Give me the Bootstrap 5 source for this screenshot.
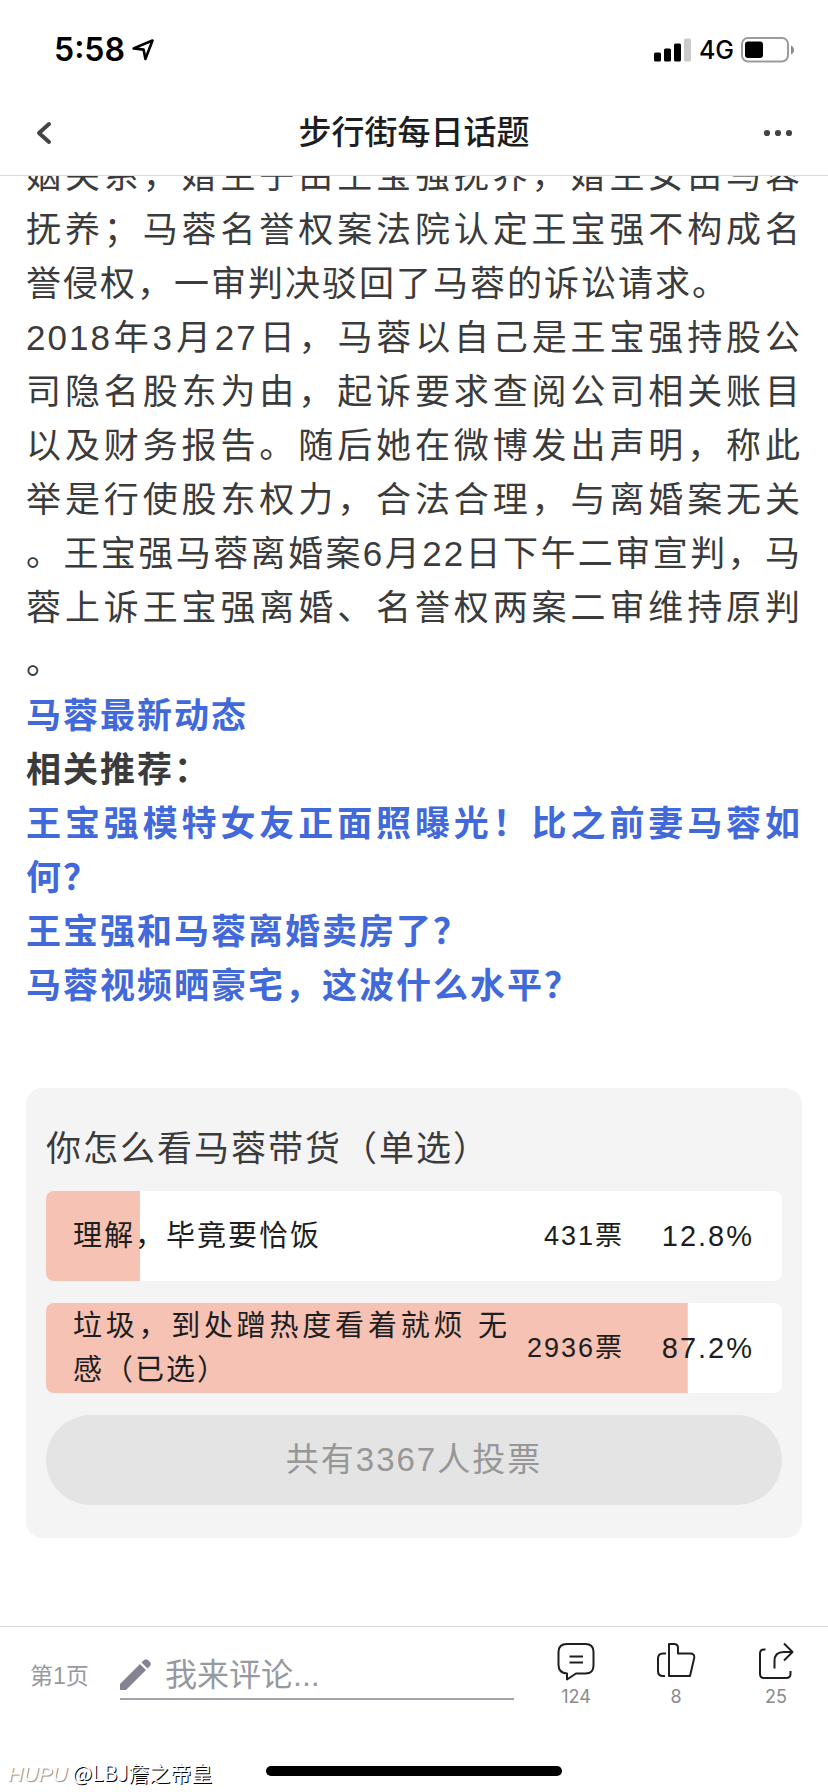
<!DOCTYPE html>
<html lang="zh-CN">
<head>
<meta charset="utf-8">
<meta name="viewport" content="width=device-width, initial-scale=1">
<title>步行街每日话题</title>
<link href="https://cdn.jsdelivr.net/npm/bootstrap@5.3.0/dist/css/bootstrap.min.css" rel="stylesheet">
<style>
  body { font-family: "Liberation Sans", "Noto Sans CJK SC", sans-serif; color: #3b3b3b; background: #fff; }
  svg { display: block; }
  .ui-num { font-family: Inter, "Noto Sans CJK SC", sans-serif; }

  .status-bar { height: 88px; padding: 12px 33px 0 54px; color: #000; }
  .status-group { gap: 7px; }
  .clock { font-size: 32px; font-weight: 600; line-height: 40px; }
  .carrier { font-size: 25px; font-weight: 500; line-height: 40px; }

  .title-bar { height: 88px; padding: 2px 24px 0; border-bottom: 1px solid #d9d9d9; }
  .title-bar h1 { font-size: 33px; font-weight: 500; line-height: 40px; color: #1d1e22; }
  .icon-btn { width: 60px; height: 60px; color: #444447; }

  .page-gutter { padding: 0 26px; }
  .article { margin-top: -27px; font-size: 35px; line-height: 54px; letter-spacing: 2px; text-align: justify; line-break: anywhere; }
  .article a { color: #4169d9; }

  .poll { margin-top: 75px; padding: 33px 20px; border-radius: 16px; background: #f4f4f4; letter-spacing: 2px; }
  .poll h2 { font-size: 35px; font-weight: 400; line-height: 56px; margin-bottom: 14px; }
  .poll-option { min-height: 90px; padding: 0 28px 0 27px; margin-bottom: 22px; border-radius: 8px; color: #1d1e22; line-height: 44px;
    background: linear-gradient(#f5c2b3, #f5c2b3) left / var(--share) 100% no-repeat #fff; }
  .option-label { width: 436px; font-size: 29px; text-align: justify; }
  .votes { font-size: 27px; }
  .share-text { width: 130px; font-size: 29px; }
  .poll-total { height: 90px; font-size: 33px; color: #979797; background: #e4e4e4; letter-spacing: 2px; }

  .bottom-bar { height: 166px; border-top: 1px solid #d9d9d9; }
  .page-link-no { width: 120px; padding-left: 30px; font-size: 23px; line-height: 36px; color: #96999f; margin-top: 31px; }
  .comment-box { height: 58px; margin-top: 15px; padding-top: 10px; gap: 13px; border-bottom: 2px solid #a6a5ae; }
  .comment-box input { font-size: 32px; line-height: 44px; padding: 0; }
  .comment-box input::placeholder { color: #96999f; opacity: 1; }
  .actions { margin-left: 12px; margin-right: 2px; padding-top: 14px; }
  .action-btn { width: 100px; font-size: 18px; line-height: 24px; color: #8a8a8d; }
  .home-bar { width: 296px; height: 10px; border-radius: 5px; background: #000; }
  .watermark { left: 8px; bottom: 3px; font-family: "Noto Sans CJK SC", sans-serif; font-size: 21px; line-height: 30px; color: #fff; text-shadow: 1px 1px 0 #000; }
  .watermark em { text-shadow: 1px 1px 1px #8a8a8a; font-family: "Liberation Sans", sans-serif; }
</style>
</head>
<body>
<div class="vh-100 d-flex flex-column overflow-hidden">
  <div class="status-bar ui-num d-flex align-items-center justify-content-between flex-shrink-0">
    <div class="status-group d-flex align-items-center">
      <span class="clock">5:58</span>
      <svg width="22" height="22" viewBox="0 0 22 22" fill="none" stroke="#000" stroke-width="2.6" stroke-linejoin="round"><path d="M20.5 1.5 L13.4 20 L11.6 10.6 L1.6 9.4 Z"/></svg>
    </div>
    <div class="status-group d-flex align-items-center">
      <svg width="38" height="24" viewBox="0 0 38 24"><rect x="0" y="14.5" width="7" height="9" rx="1.5"/><rect x="10" y="10.5" width="7" height="13" rx="1.5"/><rect x="20" y="5.5" width="7" height="18" rx="1.5"/><rect x="30" y="0.5" width="7" height="23" rx="1.5" fill="#cbcbcb"/></svg>
      <span class="carrier">4G</span>
      <svg width="54" height="26" viewBox="0 0 54 26"><rect x="1" y="1" width="46" height="23.5" rx="6" fill="none" stroke="#9c9c9c" stroke-width="2"/><rect x="4" y="4.5" width="18" height="16.5" rx="3"/><path d="M50 8.5 q3 1.5 3 4.5 t-3 4.5z" fill="#8c8c8c"/></svg>
    </div>
  </div>

  <header class="title-bar d-flex align-items-center justify-content-between flex-shrink-0">
    <button type="button" class="btn icon-btn p-0 border-0" aria-label="返回"><svg width="40" height="60" viewBox="0 0 40 60" fill="none" stroke="currentColor" stroke-width="4" stroke-linecap="round" stroke-linejoin="round"><path d="M25 21 L15 30 L25 39"/></svg></button>
    <h1 class="m-0">步行街每日话题</h1>
    <button type="button" class="btn icon-btn p-0 border-0" aria-label="更多"><svg width="60" height="60" viewBox="0 0 60 60" fill="currentColor"><circle cx="23" cy="30" r="3.1"/><circle cx="34" cy="30" r="3.1"/><circle cx="45" cy="30" r="3.1"/></svg></button>
  </header>

  <main class="page-gutter flex-grow-1 overflow-hidden">
    <article class="article">
      <p class="m-0">姻关系，婚生子由王宝强抚养，婚生女由马蓉抚养；马蓉名誉权案法院认定王宝强不构成名誉侵权，一审判决驳回了马蓉的诉讼请求。</p>
      <p class="m-0">2018年3月27日，马蓉以自己是王宝强持股公司隐名股东为由，起诉要求查阅公司相关账目以及财务报告。随后她在微博发出声明，称此举是行使股东权力，合法合理，与离婚案无关。王宝强马蓉离婚案6月22日下午二审宣判，马蓉上诉王宝强离婚、名誉权两案二审维持原判。</p>
      <p class="m-0"><a href="#" class="fw-bold text-decoration-none">马蓉最新动态</a></p>
      <p class="m-0 fw-bold">相关推荐：</p>
      <p class="m-0"><a href="#" class="fw-bold text-decoration-none">王宝强模特女友正面照曝光！比之前妻马蓉如何？</a></p>
      <p class="m-0"><a href="#" class="fw-bold text-decoration-none">王宝强和马蓉离婚卖房了？</a></p>
      <p class="m-0"><a href="#" class="fw-bold text-decoration-none">马蓉视频晒豪宅，这波什么水平？</a></p>
    </article>

    <section class="poll">
      <h2>你怎么看马蓉带货（单选）</h2>
      <div class="poll-option d-flex align-items-center" style="--share:12.8%">
        <span class="option-label">理解，毕竟要恰饭</span>
        <span class="votes ms-auto">431票</span>
        <span class="share-text text-end">12.8%</span>
      </div>
      <div class="poll-option d-flex align-items-center" style="--share:87.2%">
        <span class="option-label">垃圾，到处蹭热度看着就烦 无感（已选）</span>
        <span class="votes ms-auto">2936票</span>
        <span class="share-text text-end">87.2%</span>
      </div>
      <button type="button" class="poll-total btn border-0 rounded-pill w-100 p-0">共有3367人投票</button>
    </section>
  </main>

  <footer class="bottom-bar position-relative d-flex flex-column justify-content-between flex-shrink-0">
    <div class="d-flex align-items-start">
      <span class="page-link-no flex-shrink-0">第1页</span>
      <label class="comment-box d-flex align-items-center flex-grow-1">
        <svg class="flex-shrink-0" width="32" height="32" viewBox="0 0 32 32" fill="#858391"><path d="M0 25 L20 5 L26 11 L6 31 H0Z"/><path d="M21.500 3.500 L24 1 Q26 -0.500 28 1 L30 3 Q31.500 5 30 7 L27.500 9.500Z"/></svg>
        <input type="text" class="form-control border-0 shadow-none bg-transparent rounded-0" placeholder="我来评论..." aria-label="我来评论">
      </label>
      <div class="actions ui-num d-flex flex-shrink-0">
        <button type="button" class="action-btn btn border-0 p-0 d-flex flex-column align-items-center gap-1" aria-label="评论 124">
          <svg width="40" height="40" viewBox="0 0 40 40" fill="none" stroke="#1d1e22" stroke-width="2" stroke-linejoin="round"><path d="M11 3 H29.5 Q37.5 3 37.5 11 V24.5 Q37.5 32.5 29.5 32.5 H20 L11 38.5 V32.5 Q2.5 32 2.5 24 V11 Q2.5 3 11 3Z"/><path d="M13.5 15.5 H27 M13.5 21.5 H27"/></svg>
          <span>124</span>
        </button>
        <button type="button" class="action-btn btn border-0 p-0 d-flex flex-column align-items-center gap-1" aria-label="点赞 8">
          <svg width="40" height="40" viewBox="0 0 40 40" fill="none" stroke="#1d1e22" stroke-width="2" stroke-linejoin="round"><path d="M13 35 V3 H18 Q22 3 22 7 V12.5 H34 Q39 12.5 38.2 17 L34 35Z M10 12.5 H7 Q2 12.5 2 17.5 V30 Q2 35 7 35 H9"/></svg>
          <span>8</span>
        </button>
        <button type="button" class="action-btn btn border-0 p-0 d-flex flex-column align-items-center gap-1" aria-label="分享 25">
          <svg width="40" height="40" viewBox="0 0 40 40" fill="none" stroke="#1d1e22" stroke-width="2" stroke-linejoin="round"><path d="M9.5 8.5 H8 Q4 8.5 4 12.5 V33 Q4 37 8 37 H30 Q34.5 37 34.5 33 V30"/><path d="M18.5 27.5 V20 Q18.5 11 27.5 11 H36.5 M28 2.5 L36.5 11 L28 19.5"/></svg>
          <span>25</span>
        </button>
      </div>
    </div>
    <div class="home-bar mx-auto mb-3"></div>
    <div class="watermark position-absolute"><em>HUPU</em> @LBJ詹之帝皇</div>
  </footer>
</div>
<script src="https://cdn.jsdelivr.net/npm/bootstrap@5.3.0/dist/js/bootstrap.bundle.min.js"></script>
</body>
</html>
